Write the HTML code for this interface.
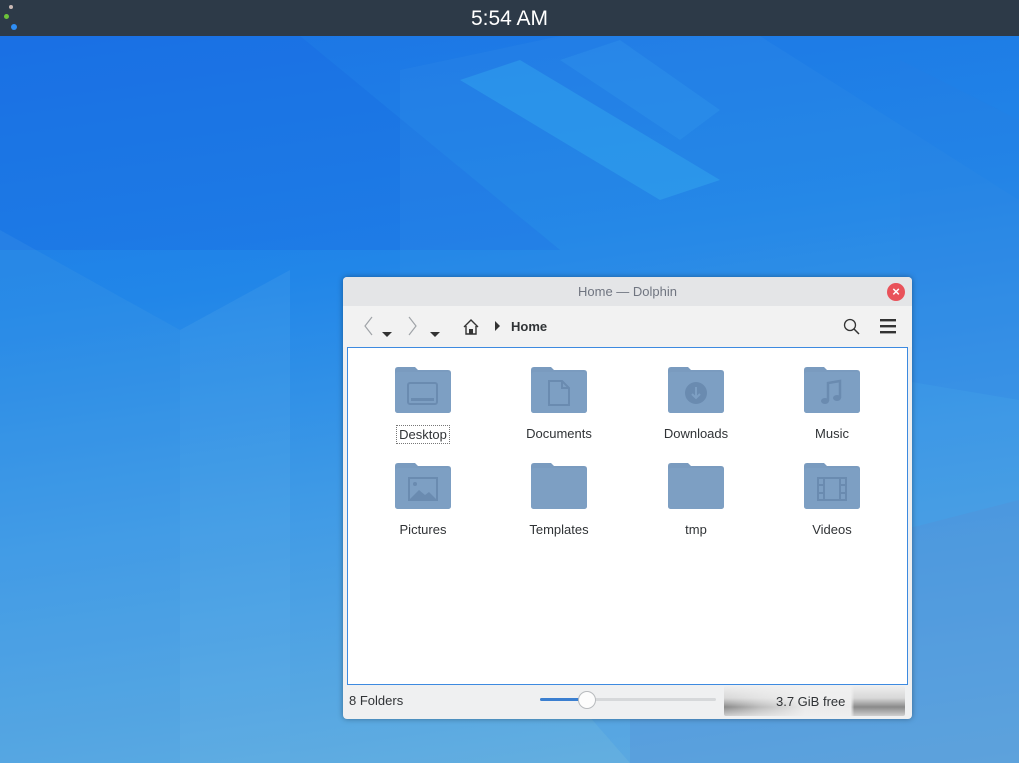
<!DOCTYPE html>
<html><head><meta charset="utf-8"><style>
*{margin:0;padding:0;box-sizing:border-box}
body{width:1019px;height:763px;overflow:hidden;position:relative;font-family:"Liberation Sans","DejaVu Sans",sans-serif;background:linear-gradient(172deg,#1b72e4 0%,#2186e8 35%,#3f9ae6 60%,#6ab2df 100%)}
#bg{position:absolute;left:0;top:0}
#top{position:absolute;left:0;top:0;width:1019px;height:36px;background:#2d3a48;color:#fff;font-size:21px;text-align:center;line-height:37px}
.dot{position:absolute;border-radius:50%}
#win{position:absolute;left:343px;top:277px;width:569px;height:442px;background:#eff0f1;border-radius:4px;box-shadow:0 0 6px rgba(0,0,0,.35);overflow:hidden}
#title{height:29px;background:#e4e5e7;text-align:center;color:#707580;font-size:13px;line-height:29px;position:relative}
#close{position:absolute;right:7px;top:6px;width:18px;height:18px;border-radius:50%;background:#e9525a;color:#fff;font-size:13px;line-height:18px;font-weight:bold}
#tb{height:41px;background:#f2f2f2;position:relative}
#view{position:absolute;left:4px;top:70px;width:561px;height:338px;background:#fff;border:1px solid #3d8ae0}
.it{position:absolute;width:120px;text-align:center;font-size:13px;color:#303336}
.it svg{display:block;margin:0 auto}
.it span{display:inline-block;margin-top:12px;padding:1px 2px}
#status{position:absolute;left:0;top:408px;width:569px;height:34px;font-size:13px;color:#303336}
</style></head><body>
<svg id="bg" width="1019" height="763">
<polygon points="0,36 300,36 560,250 0,250" fill="#1868e0" opacity=".3"/>
<polygon points="400,70 560,36 760,36 1019,200 1019,763 630,763 400,500" fill="#3593e8" opacity=".2"/>
<polygon points="460,80 520,60 720,180 660,200" fill="#38b4f0" opacity=".35"/>
<polygon points="560,60 620,40 720,110 680,140" fill="#3aaaf0" opacity=".2"/>
<polygon points="0,230 180,330 180,763 0,763" fill="#4a9fe6" opacity=".2"/>
<polygon points="180,330 290,270 290,763 180,763" fill="#63b0ea" opacity=".18"/>
<polygon points="630,600 1019,500 1019,763 630,763" fill="#5b8fd4" opacity=".3"/>
<polygon points="900,60 1019,120 1019,400 900,380" fill="#2f7fe0" opacity=".2"/>
</svg>
<div id="top">5:54 AM
<div class="dot" style="left:9px;top:5px;width:4px;height:4px;background:#c9b9b5"></div>
<div class="dot" style="left:4px;top:14px;width:5px;height:5px;background:#6cc23a"></div>
<div class="dot" style="left:11px;top:24px;width:6px;height:6px;background:#2f8ef5"></div>
</div>
<div id="win">
<div id="title">Home — Dolphin<div id="close">×</div></div>
<div id="tb">
<svg width="569" height="41" style="position:absolute;left:0;top:0">
<path d="M29,11 L22,20 L29,29" stroke="#a0a4a8" fill="none" stroke-width="1.2"/>
<path d="M39,26 h10 l-5,5z" fill="#333"/>
<path d="M66,11 L73,20 L66,29" stroke="#a0a4a8" fill="none" stroke-width="1.2"/>
<path d="M87,26 h10 l-5,5z" fill="#333"/>
<path d="M121,21 L128,14 L135,21 M123,20 V28 H133 V20" stroke="#333" fill="none" stroke-width="1.4"/>
<rect x="126" y="23" width="4" height="5" fill="#333"/>
<path d="M152,15 L157,20 L152,25z" fill="#333"/>
<circle cx="507" cy="19" r="5.5" stroke="#333" fill="none" stroke-width="1.3"/>
<path d="M511,23 L516,28" stroke="#333" stroke-width="1.5"/>
<rect x="537" y="13" width="16" height="2.4" fill="#333"/><rect x="537" y="19" width="16" height="2.4" fill="#333"/><rect x="537" y="25" width="16" height="2.4" fill="#333"/>
</svg>
<div style="position:absolute;left:168px;top:13px;font-size:13px;font-weight:bold;color:#303336">Home</div>
</div>
<div id="view">
<div class="it" style="left:15px;top:19px"><svg width="56" height="46"><path d="M0,3 Q0,0 3,0 H20 L23,3 H53 Q56,3 56,6 V43 Q56,46 53,46 H3 Q0,46 0,43z" fill="#7a9bbf"/><rect x="0" y="5" width="56" height="41" rx="3" fill="#7d9fc3"/><rect x="13" y="16" width="29" height="21" rx="2" fill="none" stroke="#6a8bb0" stroke-width="2"/><rect x="16" y="31" width="23" height="3" fill="#6a8bb0"/></svg><span style="border:1px dotted #777">Desktop</span></div>
<div class="it" style="left:151px;top:19px"><svg width="56" height="46"><path d="M0,3 Q0,0 3,0 H20 L23,3 H53 Q56,3 56,6 V43 Q56,46 53,46 H3 Q0,46 0,43z" fill="#7a9bbf"/><rect x="0" y="5" width="56" height="41" rx="3" fill="#7d9fc3"/><path d="M18,14 H31 L38,21 V38 H18z M31,14 V21 H38" fill="none" stroke="#6a8bb0" stroke-width="2"/></svg><span>Documents</span></div>
<div class="it" style="left:288px;top:19px"><svg width="56" height="46"><path d="M0,3 Q0,0 3,0 H20 L23,3 H53 Q56,3 56,6 V43 Q56,46 53,46 H3 Q0,46 0,43z" fill="#7a9bbf"/><rect x="0" y="5" width="56" height="41" rx="3" fill="#7d9fc3"/><circle cx="28" cy="26" r="11" fill="#6a8bb0"/><path d="M28,20 V30 M24,27 L28,31 L32,27" stroke="#7d9fc3" stroke-width="2" fill="none"/></svg><span>Downloads</span></div>
<div class="it" style="left:424px;top:19px"><svg width="56" height="46"><path d="M0,3 Q0,0 3,0 H20 L23,3 H53 Q56,3 56,6 V43 Q56,46 53,46 H3 Q0,46 0,43z" fill="#7a9bbf"/><rect x="0" y="5" width="56" height="41" rx="3" fill="#7d9fc3"/><path d="M24,34 V16 L36,14 V31" stroke="#6a8bb0" stroke-width="2.5" fill="none"/><ellipse cx="21" cy="34" rx="4" ry="3" fill="#6a8bb0"/><ellipse cx="33" cy="31" rx="4" ry="3" fill="#6a8bb0"/></svg><span>Music</span></div>
<div class="it" style="left:15px;top:115px"><svg width="56" height="46"><path d="M0,3 Q0,0 3,0 H20 L23,3 H53 Q56,3 56,6 V43 Q56,46 53,46 H3 Q0,46 0,43z" fill="#7a9bbf"/><rect x="0" y="5" width="56" height="41" rx="3" fill="#7d9fc3"/><rect x="14" y="15" width="28" height="22" fill="none" stroke="#6a8bb0" stroke-width="2"/><path d="M15,36 L24,27 L30,32 L34,29 L41,36z" fill="#6a8bb0"/><circle cx="20" cy="21" r="2" fill="#6a8bb0"/></svg><span>Pictures</span></div>
<div class="it" style="left:151px;top:115px"><svg width="56" height="46"><path d="M0,3 Q0,0 3,0 H20 L23,3 H53 Q56,3 56,6 V43 Q56,46 53,46 H3 Q0,46 0,43z" fill="#7a9bbf"/><rect x="0" y="5" width="56" height="41" rx="3" fill="#7d9fc3"/></svg><span>Templates</span></div>
<div class="it" style="left:288px;top:115px"><svg width="56" height="46"><path d="M0,3 Q0,0 3,0 H20 L23,3 H53 Q56,3 56,6 V43 Q56,46 53,46 H3 Q0,46 0,43z" fill="#7a9bbf"/><rect x="0" y="5" width="56" height="41" rx="3" fill="#7d9fc3"/></svg><span>tmp</span></div>
<div class="it" style="left:424px;top:115px"><svg width="56" height="46"><path d="M0,3 Q0,0 3,0 H20 L23,3 H53 Q56,3 56,6 V43 Q56,46 53,46 H3 Q0,46 0,43z" fill="#7a9bbf"/><rect x="0" y="5" width="56" height="41" rx="3" fill="#7d9fc3"/><rect x="14" y="15" width="28" height="22" fill="none" stroke="#6a8bb0" stroke-width="2"/><path d="M20,15 V37 M36,15 V37 M14,22 H20 M14,30 H20 M36,22 H42 M36,30 H42" stroke="#6a8bb0" stroke-width="2"/></svg><span>Videos</span></div>
</div>
<div id="status">
<div style="position:absolute;left:6px;top:8px">8 Folders</div>
<div style="position:absolute;left:197px;top:13px;width:176px;height:3px;background:#d6d8da;border-radius:2px"></div>
<div style="position:absolute;left:197px;top:13px;width:48px;height:3px;background:#3b7fd0;border-radius:2px"></div>
<div style="position:absolute;left:235px;top:6px;width:18px;height:18px;border-radius:50%;background:#fcfcfc;border:1px solid #b8bbbe"></div>
<div style="position:absolute;left:381px;top:1px;width:181px;height:30px;background:linear-gradient(180deg,#eeeeee 0%,#d8d8d8 40%,#8a8a8a 70%,#cfcfcf 100%);border-radius:2px"></div>
<div style="position:absolute;left:381px;top:1px;width:181px;height:30px;background:linear-gradient(90deg,rgba(240,240,240,0) 0%,rgba(240,240,240,.5) 20%,rgba(240,240,240,.95) 45%,rgba(240,240,240,.95) 70%,rgba(240,240,240,0) 72%)"></div>
<div style="position:absolute;left:433px;top:9px">3.7 GiB free</div>
</div>
</div>
</body></html>
